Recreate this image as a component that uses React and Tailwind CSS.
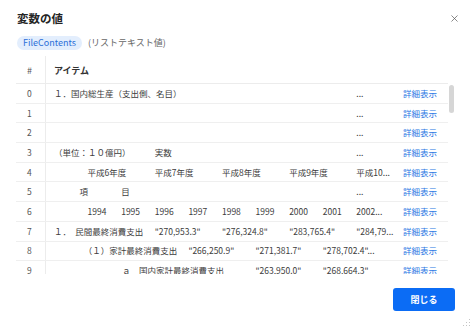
import { X } from 'lucide-react'

const rows = [
  ['１．国内総生産（支出側、名目）', '', '', '', '', '', '', '', '', '...'],
  ['', '', '', '', '', '', '', '', '', '...'],
  ['', '', '', '', '', '', '', '', '', '...'],
  ['（単位：１０億円）', '', '', '実数', '', '', '', '', '', '...'],
  ['', '平成6年度', '', '平成7年度', '', '平成8年度', '', '平成9年度', '', '平成10...'],
  ['　　　項', '', '目', '', '', '', '', '', '', '...'],
  ['', '1994', '1995', '1996', '1997', '1998', '1999', '2000', '2001', '2002...'],
  ['１．　民間最終消費支出', '', '', '"270,953.3"', '', '"276,324.8"', '', '"283,765.4"', '', '"284,79...'],
  ['　　　　（１）家計最終消費支出', '', '', '', '"266,250.9"', '', '"271,381.7"', '', '"278,702.4"...', ''],
  ['　　　　　　　　ａ　国内家計最終消費支出', '', '', '', '', '', '"263,950.0"', '', '"268,664.3"', ''],
]

export default function App() {
  return (
    <div className="w-[472px] h-[328px] bg-white flex flex-col font-['Noto_Sans_CJK_JP',sans-serif] text-[#333] overflow-hidden">
      {/* Header */}
      <div className="flex items-center justify-between pl-[17px] pr-[12px] pt-[9px] h-[28px]">
        <h1 className="text-[11.5px] font-semibold text-[#242424] leading-none">変数の値</h1>
        <X className="w-[11px] h-[11px] text-[#555]" strokeWidth={1.5} />
      </div>

      {/* Type chip */}
      <div className="flex items-center gap-[6px] pl-[17px] mt-[8px] h-[14px]">
        <span className="h-[14px] px-[6px] rounded-full bg-[#e3eefd] text-[#2b6fd8] text-[9px] leading-[14px]">FileContents</span>
        <span className="text-[9px] text-[#666]">(リストテキスト値)</span>
      </div>

      {/* Table */}
      <div className="ml-[16px] mt-[6px] flex flex-col">
        <div className="flex h-[28px] w-[432px] border-b border-[#ececec] text-[9px]">
          <div className="w-[30px] pl-[11px] pt-[3px] flex items-center text-[#555] border-r border-[#ececec]">#</div>
          <div className="flex items-center pl-[8px] pt-[3px] font-semibold text-[#333]">アイテム</div>
        </div>
        <div className="flex h-[190px] overflow-hidden">
          <div className="w-[432px] flex flex-col">
            {rows.map((cells, i) => (
              <div key={i} className="flex h-[19.7px] shrink-0 border-b border-[#efefef] text-[8.5px]">
                <div className="w-[30px] pl-[11px] flex items-center text-[#555] border-r border-[#ececec] shrink-0">{i}</div>
                <div className="w-[349px] pl-[8px] flex items-center overflow-hidden text-[#3c3c3c] shrink-0">
                  {cells.map((c, j) => (
                    <span key={j} className={j === 9 ? 'whitespace-pre shrink-0' : 'w-[33.6px] whitespace-pre shrink-0'}>{c}</span>
                  ))}
                </div>
                <div className="flex items-center pl-[8px] text-[#2a78e4] whitespace-nowrap">詳細表示</div>
              </div>
            ))}
          </div>
          <div className="w-[7px] pl-[1px] pt-[1px]">
            <div className="w-[5px] h-[28px] rounded-full bg-[#d6d6d6]" />
          </div>
        </div>
      </div>

      {/* Footer */}
      <div className="flex justify-end pr-[17px] mt-[14px]">
        <button className="w-[62px] h-[23px] rounded-[3px] bg-[#0b6cf5] text-white text-[9px] font-semibold">閉じる</button>
      </div>
      <div className="flex justify-end pr-[1px] mt-auto pb-[1px]">
        <svg width="8" height="9" viewBox="0 0 8 9" className="text-[#c4c4c4]">
          <rect x="6" y="1" width="1" height="1" fill="currentColor" />
          <rect x="6" y="4" width="1" height="1" fill="currentColor" />
          <rect x="3" y="4" width="1" height="1" fill="currentColor" />
          <rect x="6" y="7" width="1" height="1" fill="currentColor" />
          <rect x="3" y="7" width="1" height="1" fill="currentColor" />
          <rect x="0" y="7" width="1" height="1" fill="currentColor" />
        </svg>
      </div>
    </div>
  )
}
